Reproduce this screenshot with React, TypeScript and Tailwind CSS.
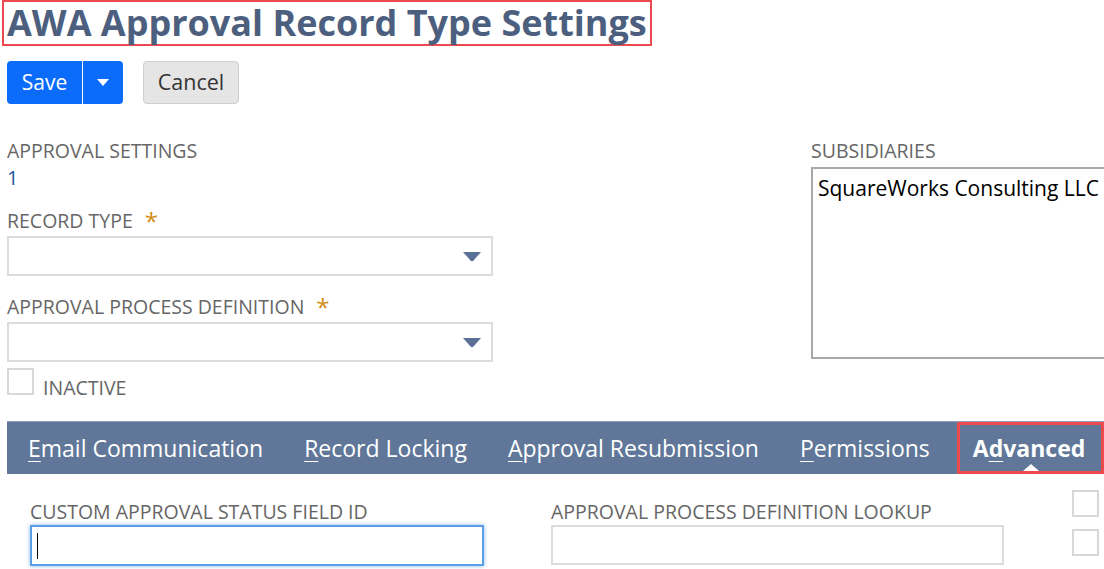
const tabs = [
  { key: 'E', rest: 'mail Communication' },
  { key: 'R', rest: 'ecord Locking' },
  { key: 'A', rest: 'pproval Resubmission' },
  { key: 'P', rest: 'ermissions' },
]

function Caret() {
  return (
    <svg width="20" height="11" viewBox="0 0 20 11" className="text-[#5a7097]">
      <path d="M1 1h18l-7.5 8.5c-0.8 0.9-2.2 0.9-3 0z" fill="currentColor" />
    </svg>
  )
}

function Label({ children, required }: { children: React.ReactNode; required?: boolean }) {
  return (
    <div className="flex items-center text-[19.5px] leading-[24px] text-[#666] uppercase">
      {children}
      {required && <span className="ml-3 text-[24px] leading-[24px] text-[#d18c16]">*</span>}
    </div>
  )
}

function Select() {
  return (
    <div className="mt-[3px] flex h-[40px] w-[486px] items-center justify-end border-2 border-[#dcdcdc] pr-[9px]">
      <Caret />
    </div>
  )
}

function Box() {
  return <div className="h-[27px] w-[27px] border-2 border-[#d8d8d8] bg-white" />
}

export default function App() {
  return (
    <div className="h-[569px] w-[1104px] overflow-hidden bg-white font-['Open_Sans',sans-serif]">
      <div className="pl-[2px]">
        <h1 className="inline-block border-[2px] border-[#ec4a4f] px-[3px] text-[36px] font-bold leading-[42px] text-[#4d5f7e]">
          AWA Approval Record Type Settings
        </h1>
      </div>

      <div className="mt-[15px] flex gap-5 pl-[7px]">
        <div className="flex h-[43px] w-[116px] overflow-hidden rounded-[4px] bg-[#0b6cfb] text-white">
          <button className="w-[75px] text-[21px]">Save</button>
          <div className="w-px bg-white" />
          <button className="flex flex-1 items-center justify-center">
            <svg width="12" height="7" viewBox="0 0 12 7"><path d="M0 0h12L6 7z" fill="white" /></svg>
          </button>
        </div>
        <button className="h-[43px] w-[96px] rounded-[4px] border border-[#cfcfcf] bg-[#e5e5e5] text-[21.5px] text-[#333]">
          Cancel
        </button>
      </div>

      <div className="mt-[35px] flex pl-[7px]">
        <div className="w-[486px]">
          <Label>Approval Settings</Label>
          <div className="mt-[3px] text-[20px] leading-[24px] text-[#255a9c]">1</div>
          <div className="mt-[19px]">
            <Label required>Record Type</Label>
            <Select />
          </div>
          <div className="mt-[19px]">
            <Label required>Approval Process Definition</Label>
            <Select />
          </div>
          <div className="mt-[6px] flex items-end gap-[9px]">
            <Box />
            <span className="translate-y-[3px] text-[19.5px] leading-[20px] text-[#666]">INACTIVE</span>
          </div>
        </div>
        <div className="ml-[318px] flex-1">
          <Label>Subsidiaries</Label>
          <div className="mt-[4px] h-[192px] w-[320px] border-2 border-[#a8a8a8] px-[5px] pt-[4px] text-[21px] leading-[30px] text-black whitespace-nowrap">
            SquareWorks Consulting LLC
          </div>
        </div>
      </div>

      <div className="ml-[7px] mt-[26px] flex h-[53px] items-center border-t border-[#8da0bd] bg-[#607799] pl-[21px] text-[23px] text-white">
        {tabs.map((t) => (
          <div key={t.rest} className="mr-[41px] whitespace-nowrap">
            <span className="underline decoration-1 underline-offset-[4px]">{t.key}</span>
            {t.rest}
          </div>
        ))}
        <div className="relative -ml-[14px] flex h-full flex-1 items-center border-[3px] border-[#ec4a4f] pl-[13px] font-bold">
          A<span className="underline decoration-1 underline-offset-[4px]">d</span>vanced
          <div className="absolute bottom-0 left-[63px] h-0 w-0 border-x-[8px] border-b-[7px] border-x-transparent border-b-white" />
        </div>
      </div>

      <div className="mt-[14px] flex pl-[30px]">
        <div className="w-[454px]">
          <div className="mt-[12px]">
            <Label>Custom Approval Status Field ID</Label>
          </div>
          <div className="mt-[1px] flex h-[41px] items-center border-2 border-[#5b9fe6] pl-[5px] shadow-[0_0_4px_#86b8ef]">
            <div className="h-[26px] w-px bg-black" />
          </div>
        </div>
        <div className="ml-[67px] w-[453px]">
          <div className="mt-[12px]">
            <Label>Approval Process Definition Lookup</Label>
          </div>
          <div className="mt-[1px] h-[40px] border-2 border-[#dcdcdc]" />
        </div>
        <div className="ml-[68px] flex flex-col gap-[12px] pt-[2px]">
          <Box />
          <Box />
        </div>
      </div>
    </div>
  )
}
